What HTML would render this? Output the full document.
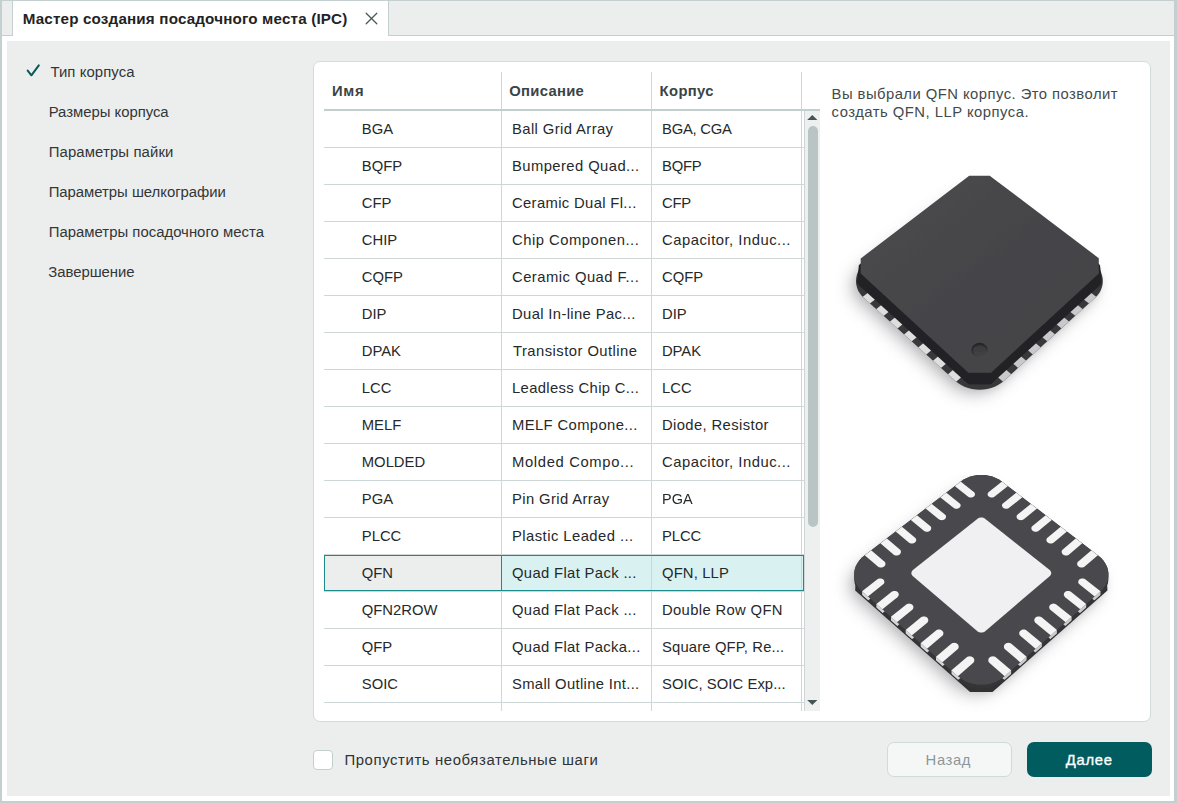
<!DOCTYPE html><html lang="ru"><head><meta charset="utf-8"><title>IPC</title><style>
*{box-sizing:border-box;margin:0;padding:0}
html,body{width:1177px;height:803px;overflow:hidden;background:#c4d0d0}
body{font-family:"Liberation Sans",sans-serif;position:relative;color:#2a2e2f}
.abs{position:absolute}
.t{position:absolute;white-space:nowrap;line-height:1}
#tabbar{left:2px;top:1px;width:1172px;height:34px;background:#eceeed}
#tabline{left:2px;top:35px;width:1172px;height:1px;background:#c4d0d0}
#white{left:2px;top:36px;width:1172px;height:765px;background:#fff}
#panel{left:7px;top:41px;width:1163px;height:755px;background:#eceeed}
#tab{left:12px;top:1px;width:377px;height:35px;background:#fff;border-left:1px solid #c4d0d0;border-right:1px solid #c4d0d0}
#card{left:313px;top:61px;width:838px;height:661px;background:#fff;border:1px solid #d2dcdc;border-radius:7px}
.hl{position:absolute;height:1px;background:#cdd7d7;left:324px;width:480px}
.vl{position:absolute;width:1px;background:#cdd7d7;top:72px;height:639px}
.side{font-size:14.6px;color:#333637}
.hdr{font-weight:bold;font-size:14.6px;color:#3a4446}
.cell{font-size:14.6px;color:#26292a}
</style></head><body>
<div class="abs" id="tabbar"></div><div class="abs" id="tabline"></div>
<div class="abs" id="white"></div><div class="abs" id="panel"></div>
<div class="abs" id="tab"></div>
<svg class="abs" style="left:364px;top:11px" width="15" height="15" viewBox="0 0 15 15"><path d="M2.2 2.2 L12.8 12.8 M12.8 2.2 L2.2 12.8" stroke="#4b5859" stroke-width="1.3" fill="none" stroke-linecap="round"/></svg>
<svg class="abs" style="left:25px;top:62px" width="18" height="16" viewBox="0 0 18 16"><path d="M2.7 8.6 L6.4 13.3 L13.8 3.4" stroke="#07595b" stroke-width="2" fill="none" stroke-linecap="round" stroke-linejoin="round"/></svg>
<div class="abs" id="card"></div>
<div class="abs" style="left:805px;top:111px;width:15px;height:600px;background:#eef0f0"></div>
<div class="abs" style="left:324px;top:555px;width:178px;height:36px;background:#eceeed"></div>
<div class="abs" style="left:502px;top:555px;width:302px;height:36px;background:#d9f2f1"></div>
<div class="hl" style="top:147px"></div>
<div class="hl" style="top:184px"></div>
<div class="hl" style="top:221px"></div>
<div class="hl" style="top:258px"></div>
<div class="hl" style="top:295px"></div>
<div class="hl" style="top:332px"></div>
<div class="hl" style="top:369px"></div>
<div class="hl" style="top:406px"></div>
<div class="hl" style="top:443px"></div>
<div class="hl" style="top:480px"></div>
<div class="hl" style="top:517px"></div>
<div class="hl" style="top:554px"></div>
<div class="hl" style="top:591px"></div>
<div class="hl" style="top:628px"></div>
<div class="hl" style="top:665px"></div>
<div class="hl" style="top:702px"></div>
<div class="vl" style="left:501px"></div>
<div class="vl" style="left:651px"></div>
<div class="vl" style="left:801px"></div>
<div class="vl" style="left:804px;top:111px;height:600px"></div>
<div class="abs" style="left:324px;top:109px;width:496px;height:2px;background:#c3cfcf"></div>
<div class="abs" style="left:324px;top:555px;width:480px;height:36px;border:1px solid #1c8c8b"></div>
<div class="abs" style="left:501px;top:555px;width:1px;height:36px;background:#1c8c8b"></div>
<div class="abs" style="left:808px;top:126px;width:10px;height:401px;background:#b9c5c5;border-radius:5px"></div>
<svg class="abs" style="left:806px;top:114px" width="13" height="8" viewBox="0 0 13 8"><path d="M1.2 6 L6.3 0.9 L11.4 6 Z" fill="#475455"/></svg>
<svg class="abs" style="left:806px;top:699px" width="13" height="8" viewBox="0 0 13 8"><path d="M1.2 1 L6.3 6.1 L11.4 1 Z" fill="#475455"/></svg>
<svg class="abs" style="left:832px;top:140px" width="300" height="280" viewBox="0 0 300 280"><defs><filter id="b1" x="-30%" y="-30%" width="160%" height="160%"><feGaussianBlur stdDeviation="8"/></filter><filter id="b1s" x="-30%" y="-30%" width="160%" height="160%"><feGaussianBlur stdDeviation="3.5"/></filter><filter id="s1" x="-5%" y="-5%" width="110%" height="110%"><feGaussianBlur stdDeviation="0.55"/></filter><linearGradient id="g1" x1="0" y1="0" x2="1" y2="1"><stop offset="0" stop-color="#4b4b4e"/><stop offset="0.5" stop-color="#454548"/><stop offset="1" stop-color="#444447"/></linearGradient><linearGradient id="gp" x1="0.2" y1="0" x2="0.7" y2="1"><stop offset="0" stop-color="#222224"/><stop offset="0.55" stop-color="#2c2c2e"/><stop offset="1" stop-color="#4a4a4d"/></linearGradient><linearGradient id="gq" x1="0" y1="0" x2="0" y2="1"><stop offset="0" stop-color="#39393b"/><stop offset="1" stop-color="#424245"/></linearGradient><clipPath id="c1"><path d="M259.7 120.7L262.2 122.8L264.5 125.1L266.4 127.6L268.1 130.3L269.3 133.1L270.2 136.0L270.7 138.9L270.8 141.8L270.5 144.8L269.8 147.6L268.7 150.4L267.3 153.0L265.4 155.5L263.2 157.7L172.0 240.7L169.2 243.0L166.1 245.0L162.7 246.7L159.1 248.0L155.3 249.0L151.5 249.6L147.6 249.8L143.7 249.6L139.8 249.0L136.1 248.0L132.5 246.7L129.1 245.0L126.0 243.0L123.1 240.7L31.7 157.7L29.5 155.5L27.6 153.0L26.1 150.4L25.0 147.6L24.3 144.8L24.0 141.8L24.1 138.9L24.6 136.0L25.5 133.1L26.8 130.3L28.4 127.6L30.4 125.1L32.7 122.8L35.2 120.6L126.6 52.0L129.1 50.3L131.8 48.8L134.7 47.6L137.7 46.7L140.9 46.0L144.2 45.6L147.5 45.4L150.7 45.6L154.0 46.0L157.2 46.7L160.2 47.6L163.1 48.8L165.8 50.3L168.3 52.0Z"/></clipPath></defs><path d="M253.7 126.7L256.2 128.8L258.5 131.1L260.4 133.6L262.1 136.3L263.3 139.1L264.2 142.0L264.7 144.9L264.8 147.8L264.5 150.8L263.8 153.6L262.7 156.4L261.3 159.0L259.4 161.5L257.2 163.7L166.0 246.7L163.2 249.0L160.1 251.0L156.7 252.7L153.1 254.0L149.3 255.0L145.5 255.6L141.6 255.8L137.7 255.6L133.8 255.0L130.1 254.0L126.5 252.7L123.1 251.0L120.0 249.0L117.1 246.7L25.7 163.7L23.5 161.5L21.6 159.0L20.1 156.4L19.0 153.6L18.3 150.8L18.0 147.8L18.1 144.9L18.6 142.0L19.5 139.1L20.8 136.3L22.4 133.6L24.4 131.1L26.7 128.8L29.2 126.6L120.6 58.0L123.1 56.3L125.8 54.8L128.7 53.6L131.7 52.7L134.9 52.0L138.2 51.6L141.5 51.4L144.7 51.6L148.0 52.0L151.2 52.7L154.2 53.6L157.1 54.8L159.8 56.3L162.3 58.0Z" fill="#7d7d82" opacity="0.42" filter="url(#b1)"/><path d="M257.7 122.7L260.2 124.8L262.5 127.1L264.4 129.6L266.1 132.3L267.3 135.1L268.2 138.0L268.7 140.9L268.8 143.8L268.5 146.8L267.8 149.6L266.7 152.4L265.3 155.0L263.4 157.5L261.2 159.7L170.0 242.7L167.2 245.0L164.1 247.0L160.7 248.7L157.1 250.0L153.3 251.0L149.5 251.6L145.6 251.8L141.7 251.6L137.8 251.0L134.1 250.0L130.5 248.7L127.1 247.0L124.0 245.0L121.1 242.7L29.7 159.7L27.5 157.5L25.6 155.0L24.1 152.4L23.0 149.6L22.3 146.8L22.0 143.8L22.1 140.9L22.6 138.0L23.5 135.1L24.8 132.3L26.4 129.6L28.4 127.1L30.7 124.8L33.2 122.6L124.6 54.0L127.1 52.3L129.8 50.8L132.7 49.6L135.7 48.7L138.9 48.0L142.2 47.6L145.5 47.4L148.7 47.6L152.0 48.0L155.2 48.7L158.2 49.6L161.1 50.8L163.8 52.3L166.3 54.0Z" fill="#77777b" opacity="0.16" filter="url(#b1s)"/><g filter="url(#s1)"><path d="M259.7 120.7L262.2 122.8L264.5 125.1L266.4 127.6L268.1 130.3L269.3 133.1L270.2 136.0L270.7 138.9L270.8 141.8L270.5 144.8L269.8 147.6L268.7 150.4L267.3 153.0L265.4 155.5L263.2 157.7L172.0 240.7L169.2 243.0L166.1 245.0L162.7 246.7L159.1 248.0L155.3 249.0L151.5 249.6L147.6 249.8L143.7 249.6L139.8 249.0L136.1 248.0L132.5 246.7L129.1 245.0L126.0 243.0L123.1 240.7L31.7 157.7L29.5 155.5L27.6 153.0L26.1 150.4L25.0 147.6L24.3 144.8L24.0 141.8L24.1 138.9L24.6 136.0L25.5 133.1L26.8 130.3L28.4 127.6L30.4 125.1L32.7 122.8L35.2 120.6L126.6 52.0L129.1 50.3L131.8 48.8L134.7 47.6L137.7 46.7L140.9 46.0L144.2 45.6L147.5 45.4L150.7 45.6L154.0 46.0L157.2 46.7L160.2 47.6L163.1 48.8L165.8 50.3L168.3 52.0Z" fill="#38383a"/><g clip-path="url(#c1)"><path d="M44.7 146.0L52.0 152.5L28.0 171.2L20.8 164.6Z" fill="#dededf"/><path d="M250.2 146.0L274.1 164.5L266.9 171.2L242.9 152.5Z" fill="#c9c9cb"/><path d="M58.2 158.1L65.7 164.7L41.7 183.8L34.3 177.0Z" fill="#dededf"/><path d="M236.7 158.1L260.7 176.9L253.3 183.7L229.3 164.7Z" fill="#c9c9cb"/><path d="M72.0 170.3L79.6 177.1L55.6 196.6L48.0 189.6Z" fill="#dededf"/><path d="M223.0 170.3L247.0 189.6L239.5 196.5L215.4 177.0Z" fill="#c9c9cb"/><path d="M86.1 182.9L93.8 189.7L69.8 209.6L62.1 202.6Z" fill="#dededf"/><path d="M208.9 182.8L233.0 202.5L225.3 209.6L201.2 189.7Z" fill="#c9c9cb"/><path d="M100.5 195.6L108.3 202.7L84.3 223.0L76.4 215.7Z" fill="#dededf"/><path d="M194.6 195.6L218.7 215.7L210.8 222.9L186.8 202.6Z" fill="#c9c9cb"/><path d="M115.1 208.7L123.2 215.8L99.1 236.6L91.0 229.2Z" fill="#dededf"/><path d="M180.0 208.7L204.1 229.1L196.1 236.5L172.0 215.8Z" fill="#c9c9cb"/><path d="M130.1 222.0L138.3 229.3L114.2 250.5L106.0 243.0Z" fill="#dededf"/><path d="M165.1 222.0L189.2 242.9L181.0 250.5L156.9 229.3Z" fill="#c9c9cb"/></g><path d="M25.3 140.6L25.3 140.3L26.8 125.8L26.9 125.5L26.9 125.2L27.1 124.9L27.3 124.7L27.5 124.4L27.8 124.2L137.5 41.4L137.8 41.2L138.0 41.1L138.3 41.0L138.6 40.9L138.9 40.9L139.3 40.9L155.6 40.9L156.0 40.9L156.3 40.9L156.6 41.0L156.9 41.1L157.1 41.3L157.4 41.4L267.1 124.2L267.4 124.4L267.6 124.7L267.8 124.9L267.9 125.2L268.0 125.5L268.1 125.8L269.6 140.3L269.6 140.6L269.6 143.1L269.5 143.4L269.4 143.7L269.3 144.0L269.1 144.2L268.9 144.4L159.4 243.7L159.1 243.9L158.7 244.1L158.4 244.3L158.0 244.4L157.7 244.5L157.3 244.5L137.9 244.5L137.5 244.5L137.2 244.4L136.8 244.3L136.5 244.2L136.1 244.0L135.8 243.7L26.0 144.4L25.7 144.2L25.6 144.0L25.4 143.7L25.4 143.4L25.3 143.1Z" fill="#232325"/><path d="M137.2 35.7L157.7 35.7L266.8 118.2L266.8 133.4L159.0 232.7L136.4 232.7L28.7 133.4L28.7 118.5Z" fill="url(#g1)"/><ellipse cx="147.6" cy="209.9" rx="8.2" ry="7.1" fill="url(#gp)"/><ellipse cx="147.6" cy="210.9" rx="6.9" ry="5.7" fill="url(#gq)" filter="url(#s1)"/></g></svg>
<svg class="abs" style="left:832px;top:440px" width="300" height="280" viewBox="0 0 300 280"><defs><filter id="b2" x="-30%" y="-30%" width="160%" height="160%"><feGaussianBlur stdDeviation="8"/></filter><filter id="b2s" x="-30%" y="-30%" width="160%" height="160%"><feGaussianBlur stdDeviation="3.5"/></filter><filter id="s2" x="-5%" y="-5%" width="110%" height="110%"><feGaussianBlur stdDeviation="0.55"/></filter></defs><path d="M260.1 126.6L262.9 129.0L265.3 131.7L267.3 134.6L268.9 137.7L269.9 140.9L270.4 144.2L270.4 147.5L269.9 150.7L268.8 153.9L267.3 156.9L265.2 159.7L262.8 162.2L166.4 247.6L163.2 250.0L159.7 252.1L155.8 253.8L151.8 255.0L147.6 255.7L143.3 256.0L139.0 255.7L134.8 255.0L130.8 253.8L126.9 252.1L123.4 250.0L120.2 247.6L23.8 162.2L21.4 159.7L19.3 156.9L17.8 153.9L16.7 150.7L16.2 147.5L16.2 144.2L16.7 140.9L17.7 137.7L19.3 134.6L21.3 131.7L23.7 129.0L26.5 126.6L122.9 52.7L125.7 50.7L128.9 49.1L132.3 47.8L135.9 46.9L139.5 46.3L143.3 46.1L147.1 46.3L150.7 46.9L154.3 47.8L157.7 49.1L160.9 50.7L163.7 52.7Z" fill="#7d7d82" opacity="0.42" filter="url(#b2)"/><path d="M264.1 122.6L266.9 125.0L269.3 127.7L271.3 130.6L272.9 133.7L273.9 136.9L274.4 140.2L274.4 143.5L273.9 146.7L272.8 149.9L271.3 152.9L269.2 155.7L266.8 158.2L170.4 243.6L167.2 246.0L163.7 248.1L159.8 249.8L155.8 251.0L151.6 251.7L147.3 252.0L143.0 251.7L138.8 251.0L134.8 249.8L130.9 248.1L127.4 246.0L124.2 243.6L27.8 158.2L25.4 155.7L23.3 152.9L21.8 149.9L20.7 146.7L20.2 143.5L20.2 140.2L20.7 136.9L21.7 133.7L23.3 130.6L25.3 127.7L27.7 125.0L30.5 122.6L126.9 48.7L129.7 46.7L132.9 45.1L136.3 43.8L139.9 42.9L143.5 42.3L147.3 42.1L151.1 42.3L154.7 42.9L158.3 43.8L161.7 45.1L164.9 46.7L167.7 48.7Z" fill="#77777b" opacity="0.16" filter="url(#b2s)"/><g filter="url(#s2)"><path d="M23.2 148.9L25.1 124.7L129.5 44.7L169.1 44.7L273.5 124.7L275.4 148.9L275.4 150.4L160.5 252.1L138.1 252.1L23.2 150.4Z" fill="#303032"/><path d="M22.2 133.0L22.7 129.7L23.7 126.5L25.3 123.4L27.3 120.5L29.7 117.8L32.5 115.4L128.9 41.5L131.7 39.5L134.9 37.9L138.3 36.6L141.9 35.7L145.5 35.1L149.3 34.9L153.1 35.1L156.7 35.7L160.3 36.6L163.7 37.9L166.9 39.5L169.7 41.5L266.1 115.4L268.9 117.8L271.3 120.5L273.3 123.4L274.9 126.5L275.9 129.7L276.4 133.0L276.4 136.7L276.4 140.0L275.9 143.2L274.8 146.4L273.3 149.4L271.2 152.2L268.8 154.7L172.4 240.1L169.2 242.5L165.7 244.6L161.8 246.3L157.8 247.5L153.6 248.2L149.3 248.5L145.0 248.2L140.8 247.5L136.8 246.3L132.9 244.6L129.4 242.5L126.2 240.1L29.8 154.7L27.4 152.2L25.3 149.4L23.8 146.4L22.7 143.2L22.2 140.0L22.2 136.7Z" fill="#353537"/><clipPath id="c2w"><path d="M22.2 133.0L22.7 129.7L23.7 126.5L25.3 123.4L27.3 120.5L29.7 117.8L32.5 115.4L128.9 41.5L131.7 39.5L134.9 37.9L138.3 36.6L141.9 35.7L145.5 35.1L149.3 34.9L153.1 35.1L156.7 35.7L160.3 36.6L163.7 37.9L166.9 39.5L169.7 41.5L266.1 115.4L268.9 117.8L271.3 120.5L273.3 123.4L274.9 126.5L275.9 129.7L276.4 133.0L276.4 136.7L276.4 140.0L275.9 143.2L274.8 146.4L273.3 149.4L271.2 152.2L268.8 154.7L172.4 240.1L169.2 242.5L165.7 244.6L161.8 246.3L157.8 247.5L153.6 248.2L149.3 248.5L145.0 248.2L140.8 247.5L136.8 246.3L132.9 244.6L129.4 242.5L126.2 240.1L29.8 154.7L27.4 152.2L25.3 149.4L23.8 146.4L22.7 143.2L22.2 140.0L22.2 136.7Z"/></clipPath><g clip-path="url(#c2w)"><path d="M30.1 151.2L32.4 149.5L38.2 154.7L38.2 158.7L36.0 160.4L30.1 155.2Z" fill="#d6d6d8"/><path d="M260.4 154.7L266.2 149.5L268.5 151.2L268.5 155.2L262.6 160.4L260.4 158.7Z" fill="#cbcbcd"/><path d="M44.4 163.9L46.7 162.1L52.6 167.4L52.6 171.4L50.4 173.2L44.4 167.9Z" fill="#d6d6d8"/><path d="M246.0 167.4L251.9 162.1L254.2 163.9L254.2 167.9L248.2 173.2L246.0 171.4Z" fill="#cbcbcd"/><path d="M59.0 176.8L61.2 175.0L67.3 180.3L67.3 184.3L65.0 186.2L59.0 180.8Z" fill="#d6d6d8"/><path d="M231.3 180.3L237.4 175.0L239.6 176.8L239.6 180.8L233.6 186.2L231.3 184.3Z" fill="#cbcbcd"/><path d="M73.7 189.9L76.0 188.0L82.1 193.5L82.1 197.5L79.9 199.3L73.7 193.9Z" fill="#d6d6d8"/><path d="M216.5 193.5L222.6 188.0L224.9 189.9L224.9 193.9L218.7 199.3L216.5 197.5Z" fill="#cbcbcd"/><path d="M88.7 203.2L91.0 201.3L97.2 206.8L97.2 210.8L95.0 212.7L88.7 207.2Z" fill="#d6d6d8"/><path d="M201.4 206.8L207.6 201.3L209.9 203.2L209.9 207.2L203.6 212.7L201.4 210.8Z" fill="#cbcbcd"/><path d="M104.0 216.7L106.2 214.8L112.6 220.4L112.6 224.4L110.3 226.3L104.0 220.7Z" fill="#d6d6d8"/><path d="M186.0 220.4L192.4 214.8L194.6 216.7L194.6 220.7L188.3 226.3L186.0 224.4Z" fill="#cbcbcd"/><path d="M119.5 230.4L121.7 228.5L128.2 234.2L128.2 238.2L125.9 240.1L119.5 234.4Z" fill="#d6d6d8"/><path d="M170.4 234.2L176.9 228.5L179.1 230.4L179.1 234.4L172.7 240.1L170.4 238.2Z" fill="#cbcbcd"/></g><path d="M266.1 115.4L268.9 117.8L271.3 120.5L273.3 123.4L274.9 126.5L275.9 129.7L276.4 133.0L276.4 136.3L275.9 139.5L274.8 142.7L273.3 145.7L271.2 148.5L268.8 151.0L172.4 236.4L169.2 238.8L165.7 240.9L161.8 242.6L157.8 243.8L153.6 244.5L149.3 244.8L145.0 244.5L140.8 243.8L136.8 242.6L132.9 240.9L129.4 238.8L126.2 236.4L29.8 151.0L27.4 148.5L25.3 145.7L23.8 142.7L22.7 139.5L22.2 136.3L22.2 133.0L22.7 129.7L23.7 126.5L25.3 123.4L27.3 120.5L29.7 117.8L32.5 115.4L128.9 41.5L131.7 39.5L134.9 37.9L138.3 36.6L141.9 35.7L145.5 35.1L149.3 34.9L153.1 35.1L156.7 35.7L160.3 36.6L163.7 37.9L166.9 39.5L169.7 41.5Z" fill="#4a4a4d"/><clipPath id="c2"><path d="M266.1 115.4L268.9 117.8L271.3 120.5L273.3 123.4L274.9 126.5L275.9 129.7L276.4 133.0L276.4 136.3L275.9 139.5L274.8 142.7L273.3 145.7L271.2 148.5L268.8 151.0L172.4 236.4L169.2 238.8L165.7 240.9L161.8 242.6L157.8 243.8L153.6 244.5L149.3 244.8L145.0 244.5L140.8 243.8L136.8 242.6L132.9 240.9L129.4 238.8L126.2 236.4L29.8 151.0L27.4 148.5L25.3 145.7L23.8 142.7L22.7 139.5L22.2 136.3L22.2 133.0L22.7 129.7L23.7 126.5L25.3 123.4L27.3 120.5L29.7 117.8L32.5 115.4L128.9 41.5L131.7 39.5L134.9 37.9L138.3 36.6L141.9 35.7L145.5 35.1L149.3 34.9L153.1 35.1L156.7 35.7L160.3 36.6L163.7 37.9L166.9 39.5L169.7 41.5Z"/></clipPath><g clip-path="url(#c2)"><path d="M179.1 43.6L162.7 56.6L162.1 57.0L161.3 57.3L160.6 57.5L159.8 57.5L158.9 57.5L158.2 57.3L157.5 57.0L156.8 56.6L156.8 56.6L156.3 56.1L155.9 55.5L155.7 54.9L155.6 54.3L155.7 53.7L155.9 53.1L156.3 52.5L156.8 52.0L173.2 39.1Z" fill="#f4f4f5"/><path d="M51.3 139.5L51.8 140.1L52.1 140.7L52.3 141.4L52.4 142.1L52.3 142.8L52.0 143.5L51.5 144.1L50.9 144.6L32.2 159.4L26.3 154.2L45.1 139.5L45.8 139.1L46.5 138.7L47.4 138.5L48.2 138.5L49.1 138.5L49.9 138.7L50.6 139.1L51.3 139.5Z" fill="#f4f4f5"/><path d="M141.8 52.0L142.3 52.5L142.7 53.1L142.9 53.7L143.0 54.3L142.9 54.9L142.7 55.5L142.3 56.1L141.8 56.6L141.8 56.6L141.1 57.0L140.4 57.3L139.7 57.5L138.8 57.5L138.0 57.5L137.3 57.3L136.5 57.0L135.9 56.6L119.5 43.6L125.4 39.1Z" fill="#f4f4f5"/><path d="M272.3 154.2L266.4 159.4L247.7 144.6L247.1 144.1L246.6 143.5L246.3 142.8L246.2 142.1L246.3 141.4L246.5 140.7L246.8 140.1L247.3 139.5L247.3 139.5L248.0 139.1L248.7 138.7L249.5 138.5L250.4 138.5L251.2 138.5L252.1 138.7L252.8 139.1L253.5 139.5Z" fill="#f4f4f5"/><path d="M193.6 54.7L177.1 67.8L176.5 68.2L175.8 68.5L175.0 68.7L174.2 68.8L173.4 68.7L172.6 68.5L171.9 68.2L171.2 67.8L171.2 67.8L170.7 67.3L170.3 66.7L170.1 66.1L170.0 65.5L170.0 64.8L170.3 64.2L170.6 63.7L171.2 63.2L187.6 50.1Z" fill="#f4f4f5"/><path d="M65.6 152.0L66.1 152.6L66.5 153.2L66.7 153.9L66.8 154.6L66.7 155.3L66.4 156.0L65.9 156.6L65.4 157.2L46.6 172.2L40.7 166.9L59.4 152.0L60.1 151.6L60.9 151.2L61.7 151.0L62.6 150.9L63.4 151.0L64.2 151.2L65.0 151.6L65.6 152.0Z" fill="#f4f4f5"/><path d="M127.4 63.2L128.0 63.7L128.3 64.2L128.6 64.8L128.6 65.5L128.5 66.1L128.3 66.7L127.9 67.3L127.4 67.8L127.4 67.8L126.7 68.2L126.0 68.5L125.2 68.7L124.4 68.8L123.6 68.7L122.8 68.5L122.1 68.2L121.5 67.8L105.0 54.7L111.0 50.1Z" fill="#f4f4f5"/><path d="M257.9 166.9L252.0 172.2L233.2 157.2L232.7 156.6L232.2 156.0L231.9 155.3L231.8 154.6L231.9 153.9L232.1 153.2L232.5 152.6L233.0 152.0L233.0 152.0L233.6 151.6L234.4 151.2L235.2 151.0L236.0 150.9L236.9 151.0L237.7 151.2L238.5 151.6L239.2 152.0Z" fill="#f4f4f5"/><path d="M208.2 65.9L191.8 79.2L191.2 79.6L190.4 79.9L189.7 80.1L188.8 80.2L188.0 80.1L187.2 79.9L186.5 79.6L185.8 79.2L185.8 79.2L185.3 78.7L184.9 78.1L184.7 77.5L184.6 76.8L184.6 76.2L184.8 75.6L185.2 75.0L185.7 74.5L202.2 61.2Z" fill="#f4f4f5"/><path d="M80.2 164.7L80.8 165.3L81.1 165.9L81.4 166.6L81.4 167.3L81.3 168.1L81.0 168.8L80.6 169.4L80.0 170.0L61.2 185.2L55.2 179.8L74.0 164.7L74.6 164.2L75.4 163.9L76.3 163.7L77.1 163.6L78.0 163.7L78.8 163.9L79.6 164.2L80.2 164.7Z" fill="#f4f4f5"/><path d="M112.9 74.5L113.4 75.0L113.8 75.6L114.0 76.2L114.0 76.8L113.9 77.5L113.7 78.1L113.3 78.7L112.8 79.2L112.8 79.2L112.1 79.6L111.4 79.9L110.6 80.1L109.8 80.2L108.9 80.1L108.2 79.9L107.4 79.6L106.8 79.2L90.4 65.9L96.4 61.2Z" fill="#f4f4f5"/><path d="M243.4 179.8L237.4 185.2L218.6 170.0L218.0 169.4L217.6 168.8L217.3 168.1L217.2 167.3L217.2 166.6L217.5 165.9L217.8 165.3L218.4 164.7L218.4 164.7L219.0 164.2L219.8 163.9L220.6 163.7L221.5 163.6L222.3 163.7L223.2 163.9L224.0 164.2L224.6 164.7Z" fill="#f4f4f5"/><path d="M223.1 77.2L206.7 90.8L206.0 91.2L205.3 91.5L204.5 91.7L203.7 91.8L202.9 91.7L202.1 91.5L201.3 91.2L200.7 90.8L200.7 90.8L200.1 90.3L199.7 89.7L199.5 89.0L199.4 88.4L199.4 87.7L199.6 87.1L200.0 86.5L200.5 86.0L217.0 72.5Z" fill="#f4f4f5"/><path d="M95.1 177.6L95.6 178.2L96.0 178.8L96.2 179.5L96.3 180.3L96.2 181.0L95.9 181.7L95.5 182.4L94.9 182.9L76.1 198.4L70.0 193.0L88.7 177.6L89.4 177.1L90.2 176.8L91.1 176.6L91.9 176.5L92.8 176.6L93.6 176.8L94.4 177.1L95.1 177.6Z" fill="#f4f4f5"/><path d="M98.1 86.0L98.6 86.5L99.0 87.1L99.2 87.7L99.2 88.4L99.1 89.0L98.9 89.7L98.5 90.3L97.9 90.8L97.9 90.8L97.3 91.2L96.5 91.5L95.7 91.7L94.9 91.8L94.1 91.7L93.3 91.5L92.6 91.2L91.9 90.8L75.5 77.2L81.6 72.5Z" fill="#f4f4f5"/><path d="M228.6 193.0L222.5 198.4L203.7 182.9L203.1 182.4L202.7 181.7L202.4 181.0L202.3 180.3L202.4 179.5L202.6 178.8L203.0 178.2L203.5 177.6L203.5 177.6L204.2 177.1L205.0 176.8L205.8 176.6L206.7 176.5L207.5 176.6L208.4 176.8L209.2 177.1L209.9 177.6Z" fill="#f4f4f5"/><path d="M238.2 88.8L221.8 102.5L221.1 102.9L220.4 103.3L219.6 103.5L218.8 103.5L218.0 103.5L217.2 103.3L216.4 102.9L215.7 102.5L215.7 102.5L215.2 102.0L214.8 101.4L214.5 100.8L214.4 100.1L214.4 99.4L214.7 98.8L215.0 98.2L215.5 97.7L232.0 84.0Z" fill="#f4f4f5"/><path d="M110.1 190.7L110.7 191.3L111.1 191.9L111.3 192.6L111.4 193.4L111.3 194.1L111.0 194.9L110.6 195.5L110.0 196.1L91.2 211.9L85.0 206.3L103.7 190.7L104.4 190.2L105.2 189.8L106.1 189.6L107.0 189.6L107.8 189.6L108.7 189.8L109.4 190.2L110.1 190.7Z" fill="#f4f4f5"/><path d="M83.1 97.7L83.6 98.2L83.9 98.8L84.2 99.4L84.2 100.1L84.1 100.8L83.8 101.4L83.4 102.0L82.9 102.5L82.9 102.5L82.2 102.9L81.4 103.3L80.6 103.5L79.8 103.5L79.0 103.5L78.2 103.3L77.5 102.9L76.8 102.5L60.4 88.8L66.6 84.0Z" fill="#f4f4f5"/><path d="M213.6 206.3L207.4 211.9L188.6 196.1L188.0 195.5L187.6 194.9L187.3 194.1L187.2 193.4L187.3 192.6L187.5 191.9L187.9 191.3L188.5 190.7L188.5 190.7L189.2 190.2L189.9 189.8L190.8 189.6L191.6 189.6L192.5 189.6L193.4 189.8L194.2 190.2L194.9 190.7Z" fill="#f4f4f5"/><path d="M253.5 100.5L237.1 114.4L236.5 114.9L235.8 115.2L235.0 115.4L234.1 115.5L233.3 115.4L232.5 115.2L231.7 114.9L231.0 114.4L231.0 114.4L230.5 113.9L230.0 113.3L229.8 112.6L229.6 112.0L229.7 111.3L229.9 110.6L230.3 110.0L230.8 109.5L247.2 95.6Z" fill="#f4f4f5"/><path d="M125.4 204.0L126.0 204.6L126.4 205.2L126.6 206.0L126.7 206.7L126.6 207.5L126.4 208.2L125.9 208.9L125.3 209.5L106.6 225.5L100.2 219.9L119.0 204.0L119.7 203.5L120.5 203.1L121.3 202.9L122.2 202.8L123.1 202.9L124.0 203.1L124.7 203.5L125.4 204.0Z" fill="#f4f4f5"/><path d="M67.8 109.5L68.3 110.0L68.7 110.6L68.9 111.3L69.0 112.0L68.8 112.6L68.6 113.3L68.1 113.9L67.6 114.4L67.6 114.4L66.9 114.9L66.1 115.2L65.3 115.4L64.5 115.5L63.6 115.4L62.8 115.2L62.1 114.9L61.5 114.4L45.1 100.5L51.4 95.6Z" fill="#f4f4f5"/><path d="M198.4 219.9L192.0 225.5L173.3 209.5L172.7 208.9L172.2 208.2L172.0 207.5L171.9 206.7L172.0 206.0L172.2 205.2L172.6 204.6L173.2 204.0L173.2 204.0L173.9 203.5L174.6 203.1L175.5 202.9L176.4 202.8L177.3 202.9L178.1 203.1L178.9 203.5L179.6 204.0Z" fill="#f4f4f5"/><path d="M269.1 112.4L252.7 126.5L252.1 127.0L251.3 127.3L250.5 127.5L249.7 127.6L248.8 127.5L248.0 127.3L247.2 127.0L246.6 126.5L246.6 126.5L246.0 126.0L245.5 125.4L245.3 124.7L245.1 124.0L245.2 123.3L245.4 122.7L245.7 122.1L246.3 121.5L262.7 107.4Z" fill="#f4f4f5"/><path d="M141.0 217.5L141.6 218.1L142.0 218.8L142.2 219.5L142.3 220.3L142.2 221.1L142.0 221.8L141.5 222.5L141.0 223.1L122.2 239.4L115.7 233.6L134.5 217.5L135.2 217.0L136.0 216.6L136.9 216.4L137.8 216.3L138.6 216.4L139.5 216.6L140.3 217.0L141.0 217.5Z" fill="#f4f4f5"/><path d="M52.3 121.5L52.9 122.1L53.2 122.7L53.4 123.3L53.5 124.0L53.3 124.7L53.1 125.4L52.6 126.0L52.0 126.5L52.0 126.5L51.4 127.0L50.6 127.3L49.8 127.5L48.9 127.6L48.1 127.5L47.3 127.3L46.5 127.0L45.9 126.5L29.5 112.4L35.9 107.4Z" fill="#f4f4f5"/><path d="M182.9 233.6L176.4 239.4L157.6 223.1L157.1 222.5L156.6 221.8L156.4 221.1L156.3 220.3L156.4 219.5L156.6 218.8L157.0 218.1L157.6 217.5L157.6 217.5L158.3 217.0L159.1 216.6L160.0 216.4L160.8 216.3L161.7 216.4L162.6 216.6L163.4 217.0L164.1 217.5Z" fill="#f4f4f5"/></g><path d="M217.7 130.1L218.3 130.7L218.8 131.4L219.1 132.2L219.2 133.0L219.2 133.8L218.9 134.6L218.5 135.3L217.9 135.9L152.9 191.4L152.1 191.9L151.3 192.3L150.3 192.6L149.3 192.6L148.3 192.6L147.3 192.3L146.5 191.9L145.7 191.4L80.7 135.9L80.1 135.3L79.7 134.6L79.4 133.8L79.4 133.0L79.5 132.2L79.8 131.4L80.3 130.7L80.9 130.1L145.9 78.6L146.6 78.1L147.5 77.8L148.4 77.6L149.3 77.5L150.2 77.6L151.1 77.8L152.0 78.1L152.7 78.6Z" fill="#f0f0f2"/></g></svg>
<div class="abs" style="left:313px;top:750px;width:20px;height:20px;background:#fff;border:1px solid #c3d0d0;border-radius:4px"></div>
<div class="abs" style="left:887px;top:742px;width:125px;height:35px;background:#f5f7f7;border:1px solid #cfdada;border-radius:7px"></div>
<div class="abs" style="left:1027px;top:742px;width:125px;height:35px;background:#005c5f;border-radius:7px"></div>
<div class="t" style="left:22.7px;top:11px;font-size:15.2px;color:#1f2324;font-weight:bold;letter-spacing:0.171px;">Мастер создания посадочного места (IPC)</div><div class="t" style="left:50.4px;top:65px;font-size:14.9px;color:#333637;letter-spacing:0.080px;">Тип корпуса</div><div class="t" style="left:48.7px;top:105px;font-size:14.9px;color:#333637;letter-spacing:-0.029px;">Размеры корпуса</div><div class="t" style="left:48.7px;top:145px;font-size:14.9px;color:#333637;letter-spacing:0.121px;">Параметры пайки</div><div class="t" style="left:48.7px;top:185px;font-size:14.9px;color:#333637;letter-spacing:-0.030px;">Параметры шелкографии</div><div class="t" style="left:48.7px;top:225px;font-size:14.9px;color:#333637;letter-spacing:0.012px;">Параметры посадочного места</div><div class="t" style="left:48.2px;top:265px;font-size:14.9px;color:#333637;letter-spacing:-0.022px;">Завершение</div><div class="t" style="left:331.9px;top:84px;font-size:14.8px;color:#3a4446;font-weight:bold;letter-spacing:0.750px;">Имя</div><div class="t" style="left:509.2px;top:84px;font-size:14.8px;color:#3a4446;font-weight:bold;letter-spacing:0.314px;">Описание</div><div class="t" style="left:659.6px;top:84px;font-size:14.8px;color:#3a4446;font-weight:bold;letter-spacing:0.360px;">Корпус</div><div class="t" style="left:361.8px;top:122px;font-size:14.8px;color:#26292a;">BGA</div><div class="t" style="left:512.0px;top:122px;font-size:14.8px;color:#26292a;letter-spacing:0.400px;">Ball Grid Array</div><div class="t" style="left:662.0px;top:122px;font-size:14.8px;color:#26292a;letter-spacing:-0.229px;">BGA, CGA</div><div class="t" style="left:361.8px;top:159px;font-size:14.8px;color:#26292a;">BQFP</div><div class="t" style="left:512.0px;top:159px;font-size:14.8px;color:#26292a;letter-spacing:0.420px;">Bumpered Quad...</div><div class="t" style="left:662.0px;top:159px;font-size:14.8px;color:#26292a;letter-spacing:-0.233px;">BQFP</div><div class="t" style="left:361.8px;top:196px;font-size:14.8px;color:#26292a;">CFP</div><div class="t" style="left:512.0px;top:196px;font-size:14.8px;color:#26292a;letter-spacing:0.353px;">Ceramic Dual Fl...</div><div class="t" style="left:662.0px;top:196px;font-size:14.8px;color:#26292a;letter-spacing:-0.200px;">CFP</div><div class="t" style="left:361.8px;top:233px;font-size:14.8px;color:#26292a;">CHIP</div><div class="t" style="left:512.0px;top:233px;font-size:14.8px;color:#26292a;letter-spacing:0.500px;">Chip Componen...</div><div class="t" style="left:662.0px;top:233px;font-size:14.8px;color:#26292a;letter-spacing:0.511px;">Capacitor, Induc...</div><div class="t" style="left:361.8px;top:270px;font-size:14.8px;color:#26292a;">CQFP</div><div class="t" style="left:512.0px;top:270px;font-size:14.8px;color:#26292a;letter-spacing:0.469px;">Ceramic Quad F...</div><div class="t" style="left:662.0px;top:270px;font-size:14.8px;color:#26292a;">CQFP</div><div class="t" style="left:361.8px;top:307px;font-size:14.8px;color:#26292a;">DIP</div><div class="t" style="left:512.0px;top:307px;font-size:14.8px;color:#26292a;letter-spacing:0.361px;">Dual In-line Pac...</div><div class="t" style="left:662.0px;top:307px;font-size:14.8px;color:#26292a;">DIP</div><div class="t" style="left:361.8px;top:344px;font-size:14.8px;color:#26292a;">DPAK</div><div class="t" style="left:513.0px;top:344px;font-size:14.8px;color:#26292a;letter-spacing:0.459px;">Transistor Outline</div><div class="t" style="left:662.0px;top:344px;font-size:14.8px;color:#26292a;letter-spacing:-0.067px;">DPAK</div><div class="t" style="left:361.8px;top:381px;font-size:14.8px;color:#26292a;">LCC</div><div class="t" style="left:512.0px;top:381px;font-size:14.8px;color:#26292a;letter-spacing:0.353px;">Leadless Chip C...</div><div class="t" style="left:662.0px;top:381px;font-size:14.8px;color:#26292a;">LCC</div><div class="t" style="left:361.8px;top:418px;font-size:14.8px;color:#26292a;">MELF</div><div class="t" style="left:512.0px;top:418px;font-size:14.8px;color:#26292a;letter-spacing:0.379px;">MELF Compone...</div><div class="t" style="left:662.0px;top:418px;font-size:14.8px;color:#26292a;letter-spacing:0.379px;">Diode, Resistor</div><div class="t" style="left:361.8px;top:455px;font-size:14.8px;color:#26292a;">MOLDED</div><div class="t" style="left:512.0px;top:455px;font-size:14.8px;color:#26292a;letter-spacing:0.643px;">Molded Compo...</div><div class="t" style="left:662.0px;top:455px;font-size:14.8px;color:#26292a;letter-spacing:0.511px;">Capacitor, Induc...</div><div class="t" style="left:361.8px;top:492px;font-size:14.8px;color:#26292a;">PGA</div><div class="t" style="left:512.0px;top:492px;font-size:14.8px;color:#26292a;letter-spacing:0.385px;">Pin Grid Array</div><div class="t" style="left:662.0px;top:492px;font-size:14.8px;color:#26292a;transform:scaleX(0.9767);transform-origin:0 0;">PGA</div><div class="t" style="left:361.8px;top:529px;font-size:14.8px;color:#26292a;">PLCC</div><div class="t" style="left:512.0px;top:529px;font-size:14.8px;color:#26292a;letter-spacing:0.453px;">Plastic Leaded ...</div><div class="t" style="left:662.0px;top:529px;font-size:14.8px;color:#26292a;letter-spacing:-0.067px;">PLCC</div><div class="t" style="left:361.8px;top:566px;font-size:14.8px;color:#26292a;">QFN</div><div class="t" style="left:512.0px;top:566px;font-size:14.8px;color:#26292a;letter-spacing:0.353px;">Quad Flat Pack ...</div><div class="t" style="left:662.0px;top:566px;font-size:14.8px;color:#26292a;letter-spacing:0.143px;">QFN, LLP</div><div class="t" style="left:361.8px;top:603px;font-size:14.8px;color:#26292a;">QFN2ROW</div><div class="t" style="left:512.0px;top:603px;font-size:14.8px;color:#26292a;letter-spacing:0.353px;">Quad Flat Pack ...</div><div class="t" style="left:662.0px;top:603px;font-size:14.8px;color:#26292a;letter-spacing:0.354px;">Double Row QFN</div><div class="t" style="left:361.8px;top:640px;font-size:14.8px;color:#26292a;">QFP</div><div class="t" style="left:512.0px;top:640px;font-size:14.8px;color:#26292a;letter-spacing:0.341px;">Quad Flat Packa...</div><div class="t" style="left:662.0px;top:640px;font-size:14.8px;color:#26292a;letter-spacing:0.150px;">Square QFP, Re...</div><div class="t" style="left:361.8px;top:677px;font-size:14.8px;color:#26292a;">SOIC</div><div class="t" style="left:512.0px;top:677px;font-size:14.8px;color:#26292a;letter-spacing:0.332px;">Small Outline Int...</div><div class="t" style="left:662.0px;top:677px;font-size:14.8px;color:#26292a;letter-spacing:0.069px;">SOIC, SOIC Exp...</div><div class="t" style="left:831.6px;top:87px;font-size:14.8px;color:#434a4b;letter-spacing:0.465px;">Вы выбрали QFN корпус. Это позволит</div><div class="t" style="left:831.6px;top:105px;font-size:14.8px;color:#434a4b;letter-spacing:0.500px;">создать QFN, LLP корпуса.</div><div class="t" style="left:344.4px;top:753px;font-size:14.9px;color:#2f3334;letter-spacing:0.603px;">Пропустить необязательные шаги</div><div class="t" style="left:925.6px;top:753px;font-size:14.8px;color:#8b9797;letter-spacing:0.600px;">Назад</div><div class="t" style="left:1065.8px;top:753px;font-size:14.8px;color:#ffffff;letter-spacing:0.700px;-webkit-text-stroke:0.35px #fff;">Далее</div>
</body></html>
